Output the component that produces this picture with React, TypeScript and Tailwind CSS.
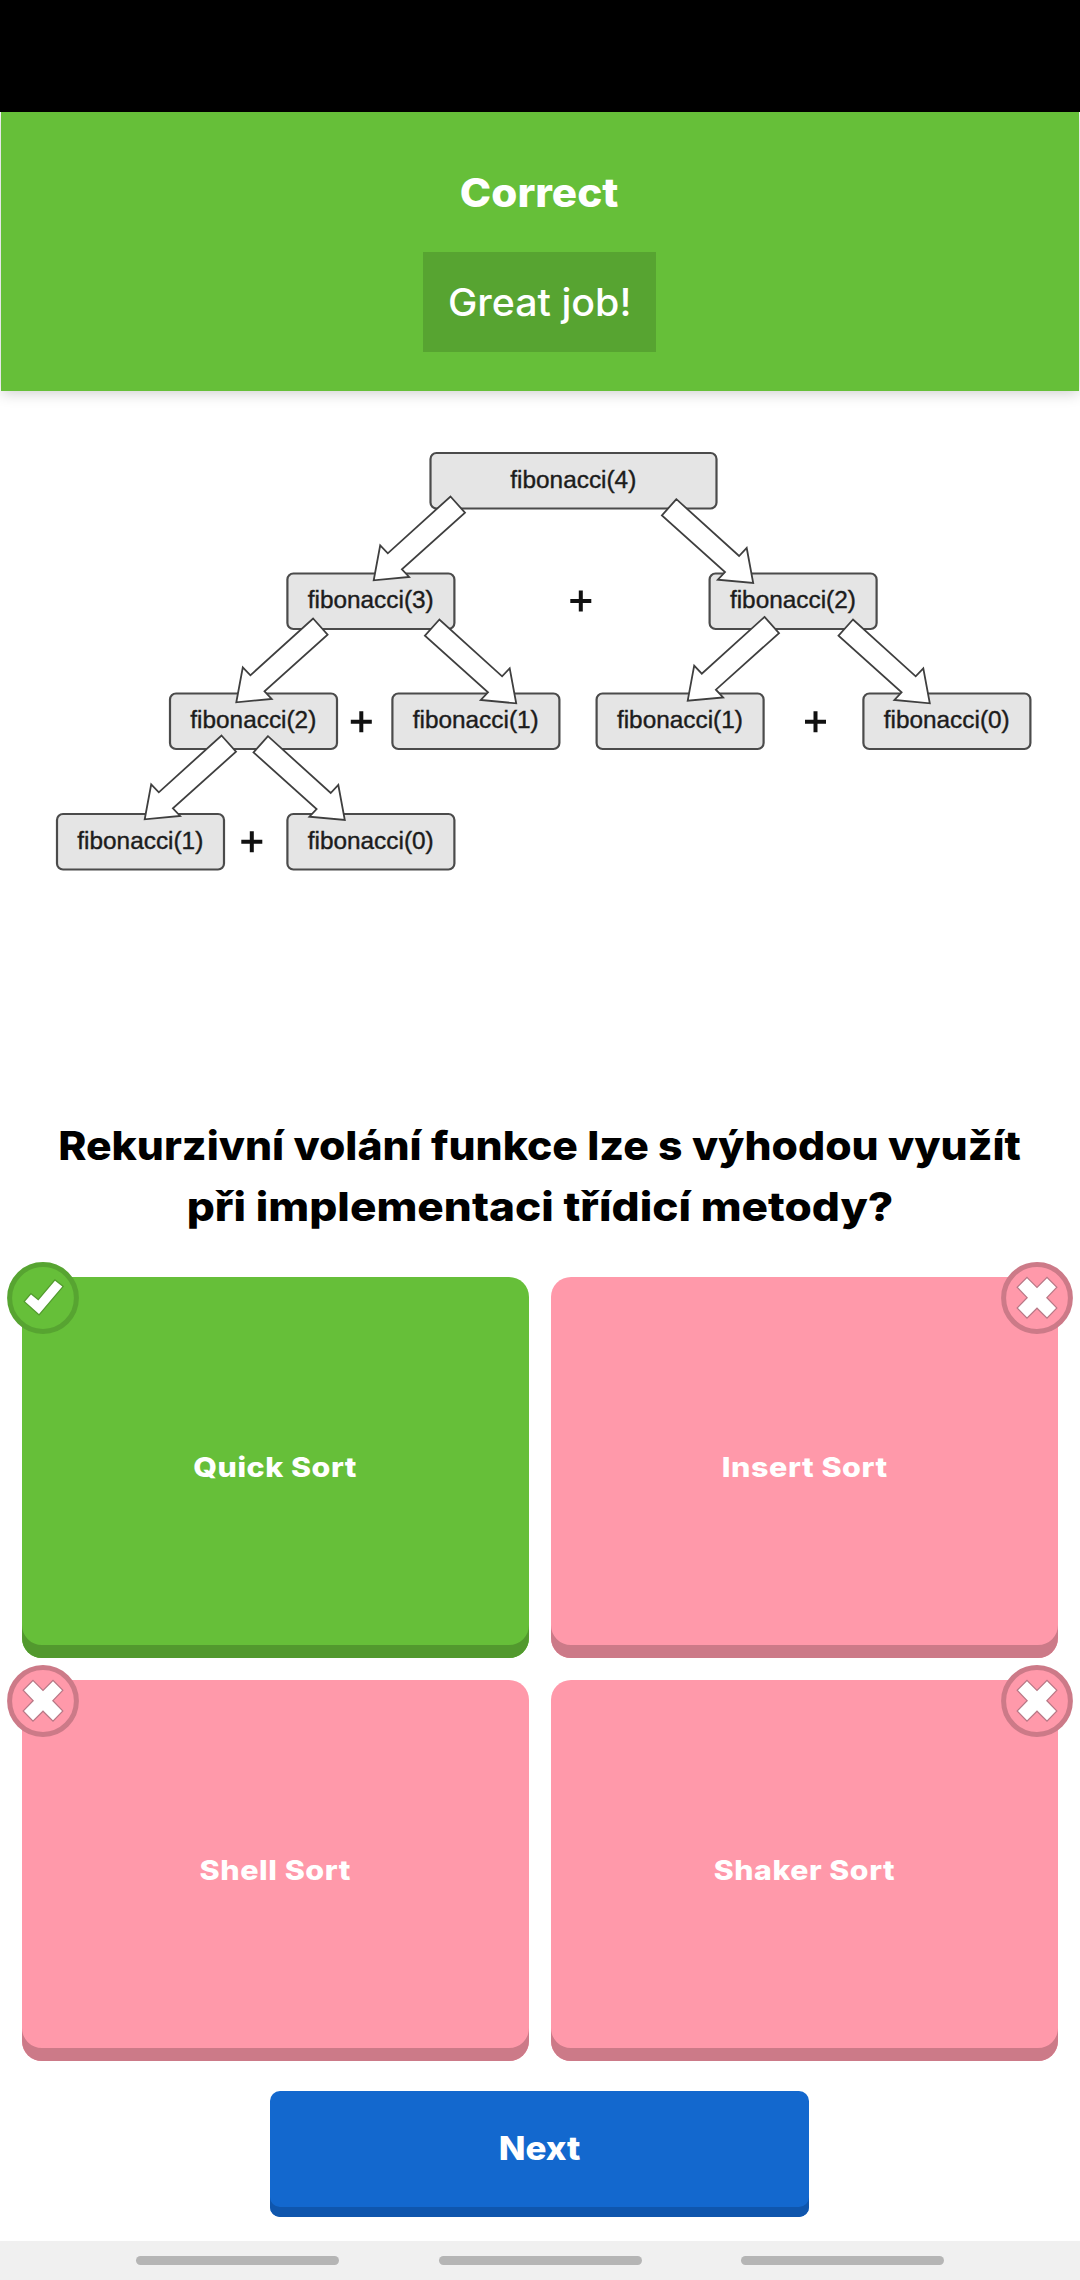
import React from "react";

type Mark = "check" | "cross";

const nodes = [
  { x: 430.5, y: 453, w: 286, n: 4 },
  { x: 287.4, y: 573.5, w: 167, n: 3 },
  { x: 709.6, y: 573.5, w: 167, n: 2 },
  { x: 170, y: 693.5, w: 167, n: 2 },
  { x: 392.4, y: 693.5, w: 167, n: 1 },
  { x: 596.6, y: 693.5, w: 167, n: 1 },
  { x: 863.4, y: 693.5, w: 167, n: 0 },
  { x: 57, y: 814, w: 167, n: 1 },
  { x: 287.4, y: 814, w: 167, n: 0 },
];

const arrows = [
  { x: 373.7, y: 580.3, d: 1 },
  { x: 236.3, y: 702.3, d: 1 },
  { x: 144.7, y: 819.3, d: 1 },
  { x: 687.7, y: 700.7, d: 1 },
  { x: 753.2, y: 583, d: -1 },
  { x: 516.2, y: 703.3, d: -1 },
  { x: 344.8, y: 820, d: -1 },
  { x: 929.8, y: 703.3, d: -1 },
];

const pluses = [
  [580.8, 601],
  [361.3, 721.7],
  [815.5, 721.7],
  [251.8, 841.7],
];

function Tree() {
  return (
    <svg className="block h-[460px] w-full" viewBox="0 430 1080 460">
      {nodes.map((b, i) => (
        <g key={i}>
          <rect x={b.x} y={b.y} width={b.w} height={55.5} rx={6} fill="#e5e5e5" stroke="#4b4b4b" strokeWidth={2.2} />
          <text
            x={b.x + b.w / 2 - 63.2}
            y={b.y + 34.6}
            fontFamily="'Liberation Sans', Arial, sans-serif"
            fontSize={24.6}
            textLength={126}
            lengthAdjust="spacingAndGlyphs"
            fill="#1c1c1c"
            stroke="#1c1c1c"
            strokeWidth={0.4}
          >
            {`fibonacci(${b.n})`}
          </text>
        </g>
      ))}
      {arrows.map((a, i) => (
        <polygon
          key={i}
          transform={`translate(${a.x} ${a.y}) scale(${a.d} 1)`}
          points="76.8,-83.8 91.3,-67.6 28.2,-11 35.4,-3.3 0,0 6.5,-35 14.1,-27"
          fill="#fff"
          stroke="#3f3f3f"
          strokeWidth={1.8}
        />
      ))}
      {pluses.map(([x, y], i) => (
        <path key={i} d={`M${x - 10.5} ${y}h21M${x} ${y - 10.5}v21`} stroke="#111" strokeWidth={4} />
      ))}
    </svg>
  );
}

function Badge({ mark, right }: { mark: Mark; right?: boolean }) {
  const ok = mark === "check";
  return (
    <svg
      viewBox="0 0 72 72"
      className={`absolute top-[-15.5px] size-[72px] ${right ? "right-[-15px]" : "left-[-15px]"}`}
    >
      <circle cx="36" cy="36" r="33.4" fill={ok ? "#66bf39" : "#ff99aa"} stroke={ok ? "#57a431" : "#cc7a88"} strokeWidth="5" />
      <polygon
        points={
          ok
            ? "24,32.5 31.3,38.5 48,18.7 55.3,24.5 32,52 18,39.5"
            : "26,16.3 36,26.3 46,16.3 55,25.3 45,35.7 55,46 46,55.3 36,45.3 26,55.3 17,46 27,35.7 17,25.3"
        }
        fill="#fff"
        stroke={ok ? "#529a2e" : "#b87886"}
        strokeWidth="2.4"
        paintOrder="stroke"
      />
    </svg>
  );
}

function Answer({ label, mark, right, stretch }: { label: string; mark: Mark; right?: boolean; stretch: string }) {
  const ok = mark === "check";
  return (
    <div
      className={`relative flex h-[381px] items-center justify-center rounded-[20px] ${
        ok
          ? "bg-[#66bf39] shadow-[inset_0_-13px_0_#52992e]"
          : "bg-[#ff99aa] shadow-[inset_0_-13px_0_#cc7a88]"
      }`}
    >
      <span className={`text-[27.5px] font-extrabold tracking-[0.5px] text-white ${stretch}`}>{label}</span>
      <Badge mark={mark} right={right} />
    </div>
  );
}

export default function App() {
  return (
    <div className="flex h-[2280px] w-[1080px] flex-col overflow-hidden bg-white font-['Inter',sans-serif]">
      <div className="h-[112px] shrink-0 bg-black" />
      <header className="mx-px flex h-[279px] shrink-0 flex-col items-center bg-[#66bf39] pt-[54px] text-white shadow-[0_2px_14px_rgba(0,0,0,0.2)]">
        <h1 className="mr-px h-[54px] scale-x-[1.055] text-[40px] leading-[54px] font-extrabold">Correct</h1>
        <div className="mt-8 mr-px flex h-[100px] w-[233px] items-center justify-center bg-[#57a431] text-[38px] font-medium">
          <span className="scale-x-[1.035]">Great job!</span>
        </div>
      </header>
      <div className="mt-[39px] shrink-0">
        <Tree />
      </div>
      <h2 className="mt-[225px] flex h-[162px] shrink-0 flex-col items-center text-[40px] leading-[61px] font-extrabold whitespace-nowrap text-black">
        <span className="scale-x-[1.066]">Rekurzivní volání funkce lze s výhodou využít</span>
        <span className="scale-x-[1.104]">při implementaci třídicí metody?</span>
      </h2>
      <main className="grid shrink-0 grid-cols-2 gap-[22px] px-[22px]">
        <Answer label="Quick Sort" mark="check" stretch="scale-x-[1.105]" />
        <Answer label="Insert Sort" mark="cross" right stretch="scale-x-[1.11]" />
        <Answer label="Shell Sort" mark="cross" stretch="scale-x-[1.11]" />
        <Answer label="Shaker Sort" mark="cross" right stretch="scale-x-[1.1]" />
      </main>
      <button className="mt-[30px] ml-[270px] h-[126px] w-[539px] shrink-0 rounded-[10px] bg-[#1368ce] pb-[11px] text-[33px] font-extrabold text-white shadow-[inset_0_-10px_0_#0f56ad]">
        <span className="inline-block scale-x-[1.06]">Next</span>
      </button>
      <nav className="mt-auto flex h-[39px] shrink-0 gap-[99.5px] bg-[#f0f0f0] pt-[15px] pl-[136px]">
        <div className="h-[9px] w-[203px] rounded-full bg-[#b5b5b5]" />
        <div className="h-[9px] w-[203px] rounded-full bg-[#b5b5b5]" />
        <div className="h-[9px] w-[203px] rounded-full bg-[#b5b5b5]" />
      </nav>
    </div>
  );
}
